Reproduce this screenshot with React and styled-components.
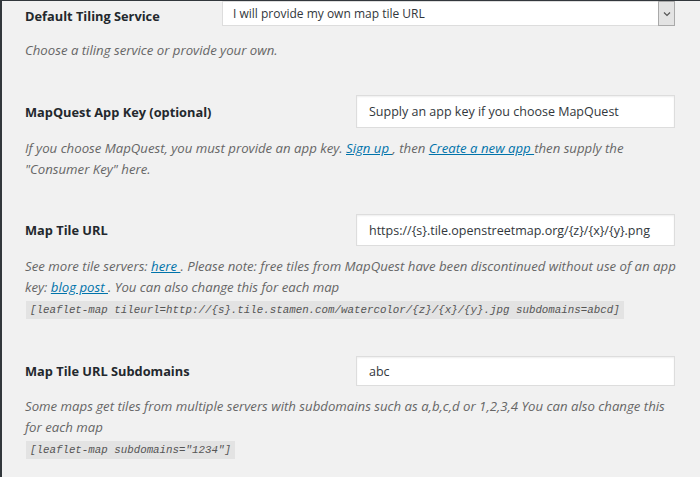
import styled, { createGlobalStyle } from "styled-components";

const GlobalStyle = createGlobalStyle`
  html, body {
    margin: 0;
    padding: 0;
    background: #f1f1f1;
  }
`;

const Page = styled.div`
  box-sizing: border-box;
  width: 700px;
  height: 477px;
  overflow: hidden;
  background: #f1f1f1;
  border-left: 2px solid #32373c;
  border-top: 1px solid #32373c;
  font-family: "Open Sans", "Noto Sans", sans-serif;
  color: #23282d;
  padding-left: 23px;
`;

const Section = styled.div`
  margin-top: ${(p) => p.$top}px;
`;

const Row = styled.div`
  display: grid;
  grid-template-columns: ${(p) => p.$labelWidth}px auto;
  align-items: center;
`;

const Label = styled.div`
  font-size: 12.8px;
  font-weight: 700;
  color: #23282d;
  padding-top: ${(p) => p.$shift || 0}px;
`;

const SelectBox = styled.div`
  box-sizing: border-box;
  width: 453px;
  height: 25px;
  background: #fff;
  border: 1px solid #ddd;
  display: flex;
  align-items: center;
  justify-content: space-between;
  font-size: 12px;
  color: #32373c;
  padding-left: 10px;
`;

const Arrow = styled.span`
  box-sizing: border-box;
  width: 17px;
  height: 25px;
  margin-right: -1px;
  background: #e3e3e3;
  border: 1px solid #a9a9a9;
  display: flex;
  align-items: center;
  justify-content: center;
`;

const TextInput = styled.div`
  box-sizing: border-box;
  width: 319px;
  height: ${(p) => p.$h || 32}px;
  background: #fff;
  border: 1px solid #ddd;
  box-shadow: inset 0 1px 2px rgba(0, 0, 0, 0.07);
  display: flex;
  align-items: center;
  padding-left: 12px;
  font-size: 12.5px;
  color: #32373c;
  white-space: nowrap;
`;

const Description = styled.p`
  margin: ${(p) => p.$top}px 0 0 0;
  width: 670px;
  font-size: 13.2px;
  font-style: italic;
  line-height: 21px;
  color: #666;
  white-space: nowrap;
`;

const Link = styled.a`
  color: #0073aa;
  text-decoration: underline;
`;

const Code = styled.code`
  display: inline-block;
  margin: -1px 0 0 1px;
  padding: 0 4px;
  background: #e3e3e3;
  font-family: "Liberation Mono", "DejaVu Sans Mono", monospace;
  font-style: italic;
  font-size: 10.8px;
  line-height: 18px;
  color: #555;
`;

export default function App() {
  return (
    <Page>
      <GlobalStyle />
      <Section $top={0}>
        <Row $labelWidth={197}>
          <Label $shift={4}>Default Tiling Service</Label>
          <SelectBox>
            I will provide my own map tile URL
            <Arrow>
              <svg width="8" height="6" viewBox="0 0 8 6">
                <path d="M1 1.5 L4 4.5 L7 1.5" fill="none" stroke="#555" strokeWidth="1.2" />
              </svg>
            </Arrow>
          </SelectBox>
        </Row>
        <Description $top={14}>Choose a tiling service or provide your own.</Description>
      </Section>

      <Section $top={34}>
        <Row $labelWidth={331}>
          <Label>MapQuest App Key (optional)</Label>
          <TextInput $h={33}>Supply an app key if you choose MapQuest</TextInput>
        </Row>
        <Description $top={10}>
          If you choose MapQuest, you must provide an app key. <Link>Sign up </Link>, then{" "}
          <Link>Create a new app </Link>then supply the
          <br />
          "Consumer Key" here.
        </Description>
      </Section>

      <Section $top={34}>
        <Row $labelWidth={331}>
          <Label>Map Tile URL</Label>
          <TextInput>https://&#123;s&#125;.tile.openstreetmap.org/&#123;z&#125;/&#123;x&#125;/&#123;y&#125;.png</TextInput>
        </Row>
        <Description $top={10}>
          See more tile servers: <Link>here </Link>. Please note: free tiles from MapQuest have been
          discontinued without use of an app
          <br />
          key: <Link>blog post </Link>. You can also change this for each map
          <br />
          <Code>[leaflet-map tileurl=http://&#123;s&#125;.tile.stamen.com/watercolor/&#123;z&#125;/&#123;x&#125;/&#123;y&#125;.jpg subdomains=abcd]</Code>
        </Description>
      </Section>

      <Section $top={37}>
        <Row $labelWidth={331}>
          <Label>Map Tile URL Subdomains</Label>
          <TextInput $h={30}>abc</TextInput>
        </Row>
        <Description $top={10}>
          Some maps get tiles from multiple servers with subdomains such as a,b,c,d or 1,2,3,4 You can also
          change this
          <br />
          for each map
          <br />
          <Code>[leaflet-map subdomains="1234"]</Code>
        </Description>
      </Section>
    </Page>
  );
}
